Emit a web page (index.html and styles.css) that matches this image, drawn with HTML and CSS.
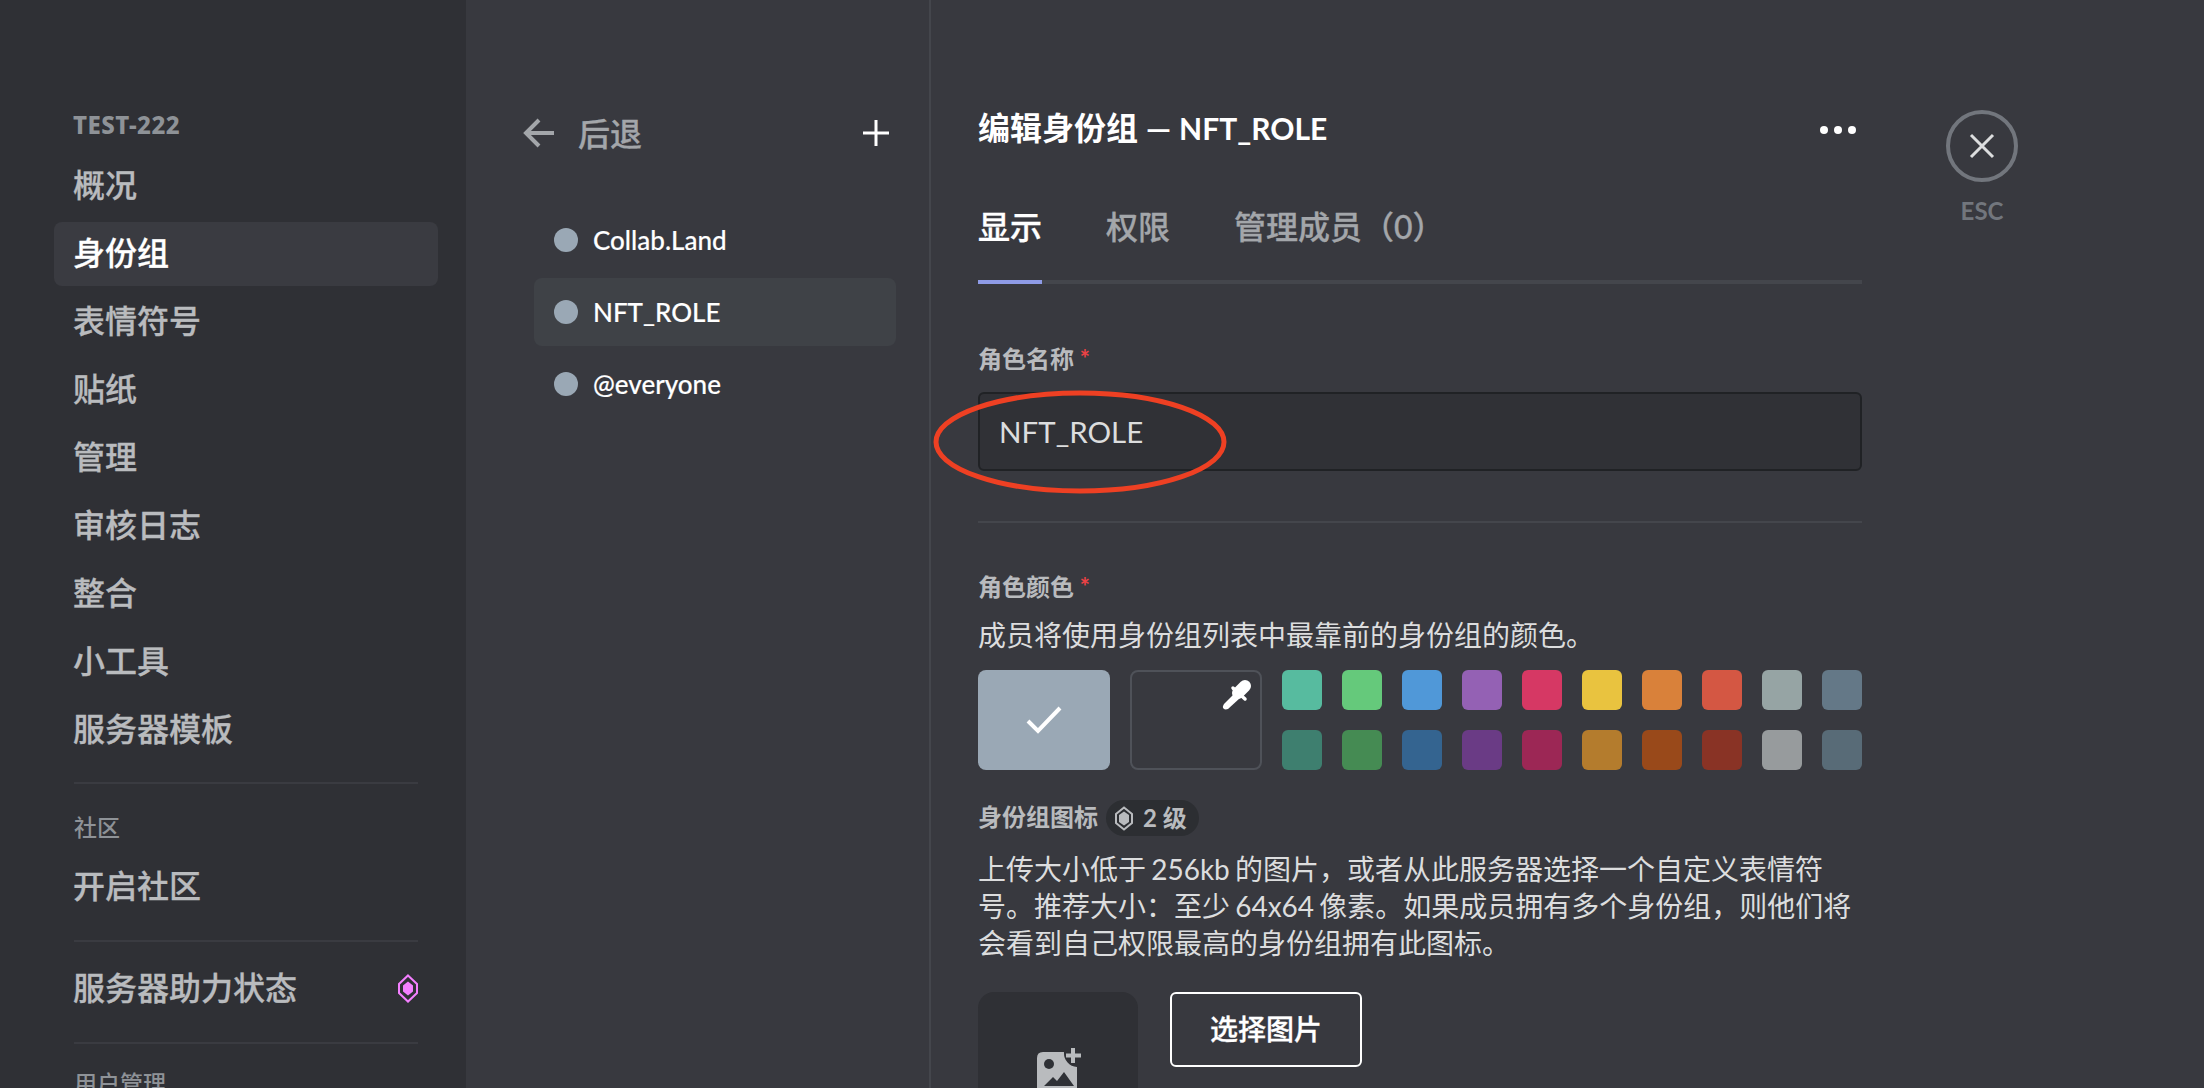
FILE: index.html
```html
<!DOCTYPE html>
<html lang="zh-CN">
<head>
  <meta charset="UTF-8" />
  <title>服务器设置 - 身份组</title>
  <link rel="stylesheet" href="styles.css">
</head>
<body>

<div class="app">
  <nav class="sidebar">
    <div class="side-title caps">TEST-222</div>
    <div class="side-item">概况</div>
    <div class="side-item active">身份组</div>
    <div class="side-item">表情符号</div>
    <div class="side-item">贴纸</div>
    <div class="side-item">管理</div>
    <div class="side-item">审核日志</div>
    <div class="side-item">整合</div>
    <div class="side-item">小工具</div>
    <div class="side-item">服务器模板</div>
    <div class="side-sep first"></div>
    <div class="side-title small">社区</div>
    <div class="side-item">开启社区</div>
    <div class="side-sep"></div>
    <div class="side-item boost">
      <span>服务器助力状态</span>
      <svg class="gem-pink" width="20" height="29" viewBox="0 0 20 29">
        <path d="M10 1.500 L19 10 V19 L10 27.500 L1 19 V10 Z" fill="none" stroke="#f47fff" stroke-width="2" />
        <path d="M10 7.500 L15 11.500 V17.500 L10 21.500 L5 17.500 V11.500 Z" fill="#f47fff" />
      </svg>
    </div>
    <div class="side-sep last"></div>
    <div class="side-title small">用户管理</div>
  </nav>

  <section class="roles">
    <div class="roles-head">
      <svg class="back-arrow" width="32" height="32" viewBox="0 0 32 32">
        <path d="M31 16 H4 M16 3 L3 16 L16 29" fill="none" stroke="#a3a6aa" stroke-width="4" />
      </svg>
      <span class="back-label">后退</span>
      <svg class="plus" width="28" height="28" viewBox="0 0 28 28">
        <path d="M14 1 V27 M1 14 H27" stroke="#fff" stroke-width="3" />
      </svg>
    </div>
    <div class="role-row"><span class="dot"></span>Collab.Land</div>
    <div class="role-row selected"><span class="dot"></span>NFT_ROLE</div>
    <div class="role-row"><span class="dot"></span>@everyone</div>
  </section>

  <main class="editor">
    <div class="editor-head">
      <h1>编辑身份组 — <span class="head-name">NFT_ROLE</span></h1>
      <svg width="36" height="10" viewBox="0 0 36 10">
        <circle cx="4" cy="5" r="4" fill="#fff" />
        <circle cx="18" cy="5" r="4" fill="#fff" />
        <circle cx="32" cy="5" r="4" fill="#fff" />
      </svg>
    </div>

    <div class="tabs">
      <div class="tab current">显示</div>
      <div class="tab">权限</div>
      <div class="tab">管理成员（0）</div>
    </div>

    <div class="label name-label">角色名称 <span class="req">*</span></div>
    <div class="name-field">
      <div class="name-input">NFT_ROLE</div>
      <svg class="circled" width="296" height="106" viewBox="0 0 296 106">
        <ellipse cx="148" cy="53" rx="144" ry="49" fill="none" stroke="#ee4023" stroke-width="5" />
      </svg>
    </div>
    <div class="divider"></div>

    <div class="label color-label">角色颜色 <span class="req">*</span></div>
    <p class="desc">成员将使用身份组列表中最靠前的身份组的颜色。</p>
    <div class="colors">
      <div class="big-swatch picked">
        <svg width="36" height="28" viewBox="0 0 36 28">
          <path d="M2 15 L12 25 L34 2" fill="none" stroke="#fff" stroke-width="4" />
        </svg>
      </div>
      <div class="big-swatch custom">
        <svg class="dropper" width="30" height="30" viewBox="0 0 30 30">
          <path d="M13 13 L18 18 L6 29 Q3 30 1.500 28.500 Q0 27 2 24 Z" fill="#fff" />
          <path d="M16 13 L23 6" stroke="#fff" stroke-width="12" stroke-linecap="round" />
          <path d="M11 8 L23 19" stroke="#fff" stroke-width="3.500" stroke-linecap="round" />
        </svg>
      </div>
      <div class="swatch-grid">
        <span class="swatch c1"></span><span class="swatch c2"></span><span class="swatch c3"></span><span class="swatch c4"></span><span class="swatch c5"></span>
        <span class="swatch c6"></span><span class="swatch c7"></span><span class="swatch c8"></span><span class="swatch c9"></span><span class="swatch c10"></span>
        <span class="swatch d1"></span><span class="swatch d2"></span><span class="swatch d3"></span><span class="swatch d4"></span><span class="swatch d5"></span>
        <span class="swatch d6"></span><span class="swatch d7"></span><span class="swatch d8"></span><span class="swatch d9"></span><span class="swatch d10"></span>
      </div>
    </div>

    <div class="icon-label">
      <span class="label">身份组图标</span>
      <span class="level">
        <svg width="18" height="25" viewBox="0 0 18 25">
          <path d="M9 1.500 L17 8 V17 L9 23.500 L1 17 V8 Z" fill="none" stroke="#b9bbbe" stroke-width="2" />
          <path d="M9 5.500 L14 9 V16 L9 19.500 L4 16 V9 Z" fill="#b9bbbe" />
        </svg>
        2 级
      </span>
    </div>
    <p class="para">上传大小低于 256kb 的图片，或者从此服务器选择一个自定义表情符<br>号。推荐大小：至少 64x64 像素。如果成员拥有多个身份组，则他们将<br>会看到自己权限最高的身份组拥有此图标。</p>

    <div class="upload">
      <div class="upload-tile">
        <svg width="46" height="48" viewBox="0 0 46 48">
          <path d="M6 4 H27 A14 14 0 0 0 40 19 V48 H0 V10 Q0 4 6 4 Z" fill="#b9bbbe" />
          <circle cx="12" cy="16" r="5" fill="#2f3136" />
          <path d="M7 38 L16 29 L20 33 L27 24 L37 38 Z" fill="#2f3136" />
          <path d="M36 0 V15 M29 7.500 H44" stroke="#b9bbbe" stroke-width="4" />
        </svg>
      </div>
      <div class="pick-btn">选择图片</div>
    </div>
  </main>

  <aside class="close-col">
    <div class="close-btn">
      <svg width="26" height="26" viewBox="0 0 26 26">
        <path d="M2 2 L24 24 M24 2 L2 24" stroke="#dcddde" stroke-width="3" />
      </svg>
    </div>
    <div class="esc">ESC</div>
  </aside>
</div>

</body>
</html>
```

FILE: styles.css
```css
* { box-sizing: border-box; }
html, body { margin: 0; height: 100%; overflow: hidden; }
body { background: #38393f; color: #dcddde; font-family: Lato, "Noto Sans CJK SC", sans-serif; }

.app { display: flex; height: 1088px; overflow: hidden; }

/* left nav */
.sidebar { width: 466px; flex-shrink: 0; height: 1088px; overflow: hidden; background: #2f3035; padding: 109px 28px 0 54px; }
.side-title { height: 32px; line-height: 32px; padding-left: 19px; margin-bottom: 13px; color: #8e9297; font-family: "Noto Sans", "Noto Sans CJK SC", sans-serif; font-size: 24px; font-weight: 800; letter-spacing: 0.5px; }
.side-title.small { height: 30px; line-height: 30px; margin-bottom: 13px; padding-left: 20px; font-size: 23px; font-weight: 500; letter-spacing: 0; }
.side-item { height: 64px; line-height: 62px; margin-bottom: 4px; padding: 0 19px; border-radius: 8px; color: #b9bbbe; font-size: 32px; font-weight: 500; -webkit-text-stroke: 0.3px; }
.side-item.active { background: #3a3b41; color: #fff; }
.side-item.boost { display: flex; align-items: center; justify-content: space-between; padding-right: 20px; }
.side-sep { height: 2px; margin: 21px 20px 14px; background: #3a3b41; }
.side-sep.first { margin: 20px 20px 28px; }
.side-sep.last { margin: 22px 20px 24px; }

/* role list */
.roles { width: 465px; flex-shrink: 0; height: 1088px; padding: 0 33px 0 68px; border-right: 2px solid #44464c; }
.roles-head { display: flex; align-items: center; height: 40px; margin: 113px 0 53px -11px; }
.back-arrow { flex-shrink: 0; }
.back-label { margin-left: 23px; margin-top: -3px; color: #a3a6aa; font-size: 32px; font-weight: 500; -webkit-text-stroke: 0.3px; }
.plus { margin-left: auto; margin-right: 6px; }
.role-row { display: flex; align-items: center; height: 68px; margin-bottom: 4px; padding-left: 20px; border-radius: 8px; color: #fff; font-size: 26px; font-weight: 500; -webkit-text-stroke: 0.15px; }
.role-row.selected { background: #3f4247; }
.dot { width: 24px; height: 24px; margin-right: 15px; border-radius: 50%; background: #9aa8b5; }

/* editor column */
.editor { width: 931px; flex-shrink: 0; height: 1088px; padding: 108px 0 0 47px; }
.editor-head { display: flex; align-items: center; justify-content: space-between; height: 40px; }
.editor-head svg { margin-top: 4px; margin-right: 6px; }
h1 { margin: 0; color: #fff; font-size: 32px; line-height: 40px; font-weight: 700; }
.head-name { font-size: 30px; }
.tabs { display: flex; gap: 64px; margin-top: 59px; border-bottom: 4px solid #44464c; }
.tab { height: 77px; margin-bottom: -4px; padding-bottom: 33px; border-bottom: 4px solid transparent; color: #a3a6aa; font-size: 32px; line-height: 40px; font-weight: 500; -webkit-text-stroke: 0.3px; }
.tab.current { color: #fff; border-bottom-color: #8e9be6; }

.label { color: #b9bbbe; font-size: 24px; line-height: 30px; font-weight: 700; }
.req { color: #ed4245; }
.name-label { margin-top: 60px; }
.name-field { position: relative; margin-top: 18px; }
.name-input { height: 79px; line-height: 75px; padding-left: 19px; background: #303136; border: 2px solid #202225; border-radius: 6px; color: #dcddde; font-size: 29.500px; }
.circled { position: absolute; left: -46px; top: -3px; }
.divider { height: 2px; margin-top: 50px; background: #44464c; }
.color-label { margin-top: 49px; }
.desc { margin: 15px 0 0; font-size: 28px; line-height: 36px; }

.colors { display: flex; margin-top: 17px; }
.big-swatch { position: relative; display: flex; align-items: center; justify-content: center; width: 132px; height: 100px; margin-right: 20px; border-radius: 8px; }
.big-swatch.picked { background: #9aa8b5; }
.big-swatch.custom { border: 2px solid #4f5259; }
.dropper { position: absolute; top: 8px; right: 8px; }
.swatch-grid { display: grid; grid-template-columns: repeat(10, 40px); gap: 20px; }
.swatch { height: 40px; border-radius: 6px; }
.c1 { background: #57bb9f; }
.c2 { background: #65c97b; }
.c3 { background: #5098d8; }
.c4 { background: #9461b4; }
.c5 { background: #d63864; }
.c6 { background: #e9c33f; }
.c7 { background: #d9813a; }
.c8 { background: #d45743; }
.c9 { background: #96a4a4; }
.c10 { background: #647887; }
.d1 { background: #3e7f6f; }
.d2 { background: #458b53; }
.d3 { background: #346490; }
.d4 { background: #6a3b85; }
.d5 { background: #9c2755; }
.d6 { background: #b47c2d; }
.d7 { background: #99491a; }
.d8 { background: #893325; }
.d9 { background: #979b9d; }
.d10 { background: #586b77; }

.icon-label { display: flex; align-items: center; height: 36px; margin-top: 30px; }
.icon-label .label { margin-top: -3px; }
.level { display: flex; align-items: center; gap: 10px; height: 36px; margin-left: 8px; padding: 0 12px 0 9px; background: #2c2e32; border-radius: 18px; color: #b9bbbe; font-size: 24px; line-height: 30px; font-weight: 700; }
.para { margin: 15px 0 0; font-size: 28px; line-height: 37px; white-space: nowrap; word-spacing: -2px; }

.upload { display: flex; align-items: flex-start; gap: 32px; margin-top: 30px; }
.upload-tile { display: flex; justify-content: center; width: 160px; height: 160px; padding-top: 56px; padding-left: 4px; background: #2f3035; border-radius: 16px; }
.pick-btn { width: 192px; height: 75px; line-height: 71px; text-align: center; border: 2px solid #fff; border-radius: 6px; color: #fff; font-size: 28px; font-weight: 500; -webkit-text-stroke: 0.3px; }

/* esc button */
.close-col { flex-shrink: 0; width: 72px; margin-left: 84px; padding-top: 110px; }
.close-btn { display: flex; align-items: center; justify-content: center; width: 72px; height: 72px; border: 4px solid #72767d; border-radius: 50%; }
.esc { margin-top: 14px; text-align: center; color: #72767d; font-size: 24px; line-height: 30px; font-weight: 700; }
```
